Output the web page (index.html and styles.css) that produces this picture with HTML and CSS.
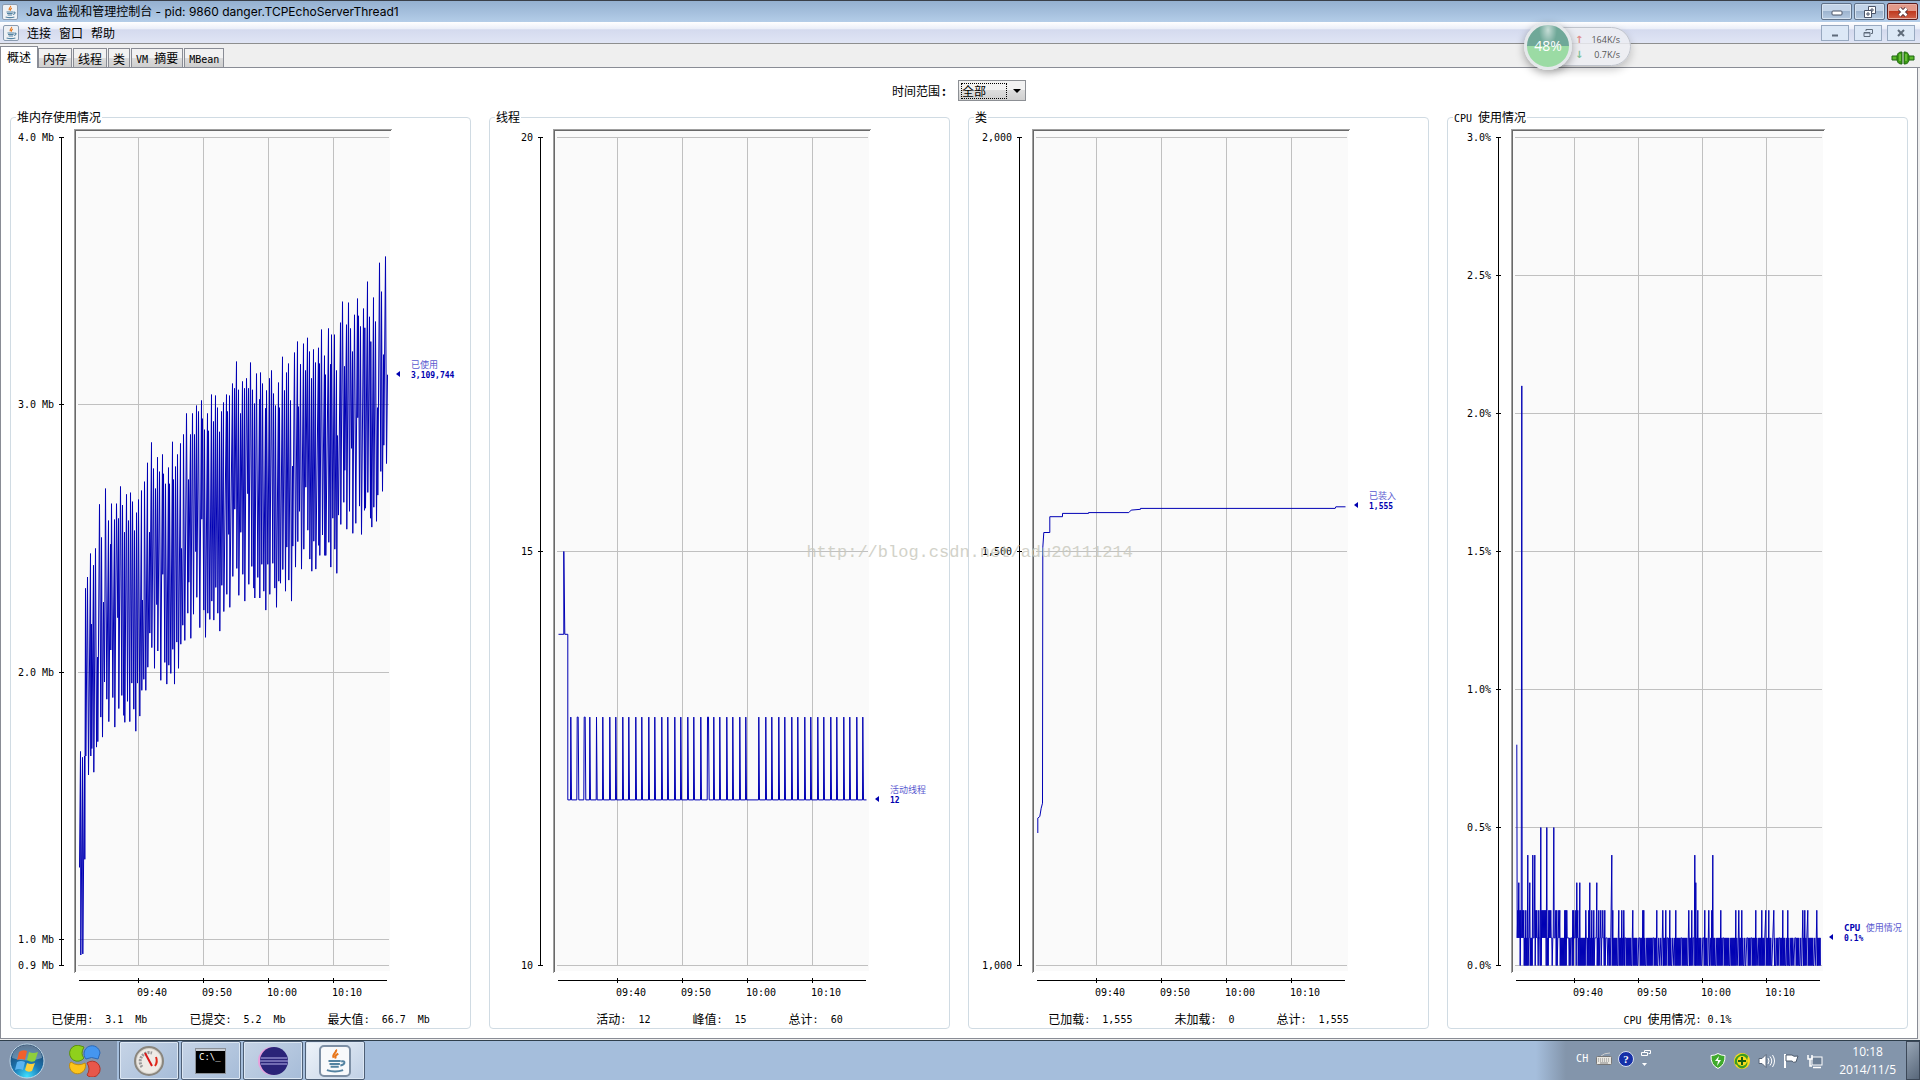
FILE: index.html
```html
<!DOCTYPE html>
<html lang="zh-CN">
<head>
    <meta charset="UTF-8">
    <title>Java 监视和管理控制台</title>
    <link rel="stylesheet" href="styles.css">
</head>
<body>
<svg class="defs" aria-hidden="true">
    <symbol id="java" viewBox="0 0 16 16">
        <path d="M8.6 1c1 1.600-2.800 2.600-1.400 5M10 3.500c-1.500 1-2.300 1.400-1.500 3" fill="none" stroke="#e8761b" stroke-width="1.300"/>
        <path d="M4 8h7.500M4.600 9.800h6.400M5.300 11.500h5M3 13.600c3 1 7 1 10 0M11.800 8.300c3-.8 2.500 2-.5 2.500" fill="none" stroke="#5382a1" stroke-width="1.200"/>
    </symbol>
</svg>
<header class="titlebar">
    <svg class="appicon"><use href="#java"/></svg>
    <h1>Java 监视和管理控制台 - pid: 9860 danger.TCPEchoServerThread1</h1>
    <div class="winbtns">
        <button aria-label="最小化"><svg width="12" height="12"><rect x="1" y="5" width="10" height="4" rx="1" fill="#fff" stroke="#4b5468"/></svg></button>
        <button aria-label="还原"><svg width="12" height="12" fill="#fff" stroke="#4b5468"><path d="M4.500 .5h7v7h-7zM7 3h2v2H7z"/><path d="M.5 4.500h7v7h-7zM3 7h2v2H3z"/></svg></button>
        <button class="close" aria-label="关闭"><svg width="12" height="12" fill="none"><path d="M2.500 2.500l7 7m0-7l-7 7" stroke="#53323a" stroke-width="4.500"/><path d="M2.500 2.500l7 7m0-7l-7 7" stroke="#fff" stroke-width="2.500"/></svg></button>
    </div>
</header>
<nav class="menubar">
    <svg class="appicon"><use href="#java"/></svg>
    <button class="menu">连接</button>
    <button class="menu">窗口</button>
    <button class="menu">帮助</button>
    <div class="winbtns inner">
        <button aria-label="最小化"><svg width="10" height="10"><path d="M2 7.500h6" stroke="#5f6b7a" stroke-width="2"/></svg></button>
        <button aria-label="还原"><svg width="10" height="10" fill="none" stroke="#5f6b7a"><path d="M3 3V1.500h6.500v4H8"/><path d="M1 4.500h6v4H1zM1 5h6"/></svg></button>
        <button aria-label="关闭"><svg width="10" height="10"><path d="M2 2l6 6m0-6l-6 6" stroke="#5f6b7a" stroke-width="2"/></svg></button>
    </div>
</nav>
<div class="tabs" role="tablist">
    <button class="tab on" role="tab">概述</button>
    <button class="tab" role="tab">内存</button>
    <button class="tab" role="tab">线程</button>
    <button class="tab" role="tab">类</button>
    <button class="tab" role="tab"><span class="mono">VM </span>摘要</button>
    <button class="tab" role="tab"><span class="mono">MBean</span></button>
    <svg class="plug" width="24" height="14">
        <path d="M1 5h6v4H1zM17 5h6v4h-6z" fill="#5cb82c" stroke="#1d6410"/>
        <path d="M11 1C7 1 6 3 6 7s1 6 5 6zM13 1c4 0 5 2 5 6s-1 6-5 6z" fill="#3c9a12" stroke="#1d6410"/>
        <path d="M9 3v7M15 3v7" stroke="#8ee05a"/>
    </svg>
</div>
<main class="pane">
    <div class="range">
        <label for="range">时间范围<b>:</b></label>
        <span class="combo"><select id="range"><option>全部</option></select></span>
    </div>
    <div class="charts">
        <fieldset class="panel">
            <legend>堆内存使用情况</legend>
            <div class="chart" id="heap"></div>
            <dl>
                <div><dt>已使用</dt><dd>:  3.1  Mb</dd></div>
                <div><dt>已提交</dt><dd>:  5.2  Mb</dd></div>
                <div><dt>最大值</dt><dd>:  66.7  Mb</dd></div>
            </dl>
        </fieldset>
        <fieldset class="panel">
            <legend>线程</legend>
            <div class="chart" id="threads"></div>
            <dl>
                <div><dt>活动</dt><dd>:  12</dd></div>
                <div><dt>峰值</dt><dd>:  15</dd></div>
                <div><dt>总计</dt><dd>:  60</dd></div>
            </dl>
        </fieldset>
        <fieldset class="panel">
            <legend>类</legend>
            <div class="chart" id="classes"></div>
            <dl>
                <div><dt>已加载</dt><dd>:  1,555</dd></div>
                <div><dt>未加载</dt><dd>:  0</dd></div>
                <div><dt>总计</dt><dd>:  1,555</dd></div>
            </dl>
        </fieldset>
        <fieldset class="panel">
            <legend><span class="mono">CPU </span>使用情况</legend>
            <div class="chart" id="cpu"></div>
            <dl>
                <div><dt><span class="mono">CPU </span>使用情况</dt><dd>: 0.1%</dd></div>
            </dl>
        </fieldset>
    </div>
</main>
<footer class="taskbar">
    <div class="launch">
        <button class="start" aria-label="开始">
            <svg width="36" height="36" viewBox="0 0 36 36">
                <defs><radialGradient id="orb" cx=".5" cy=".95" r=".9"><stop offset="0" stop-color="#3fe0ff"/><stop offset=".45" stop-color="#1b78b4"/><stop offset="1" stop-color="#1c3f66"/></radialGradient></defs>
                <circle cx="18" cy="18" r="17" fill="url(#orb)" stroke="#c0d8e8"/>
                <path d="M3 15a15 13 0 0 1 30 0q-15 5-30 0" fill="#fff" opacity=".3"/>
                <path d="M10 9q4-3 8-1l-2 9q-4-2-8 0z" fill="#f0602c"/>
                <path d="M20 9q4 2 9 0l-3 9q-4 2-8-1z" fill="#8fce3c"/>
                <path d="M8 19q4-2 8 0l-2 8q-4-2-8 0z" fill="#5cb4f0"/>
                <path d="M18 20q4 2 8 0l-3 8q-4 2-7-1z" fill="#fcd03c"/>
            </svg>
        </button>
        <button class="start" aria-label="安全桌面">
            <svg width="32" height="32" viewBox="0 0 32 32">
                <path d="M12 1A8 8 0 1 0 15 13Q11 9 15 2z" fill="#8fd01c" stroke="#5a8f10"/>
                <path d="M31 8A8 8 0 1 0 17 14Q22 11 29 14z" fill="#4596f0" stroke="#2a68b8"/>
                <path d="M19 31A8 8 0 1 0 18 18Q22 24 18 30z" fill="#e8574a" stroke="#b03428"/>
                <path d="M1 18A8 8 0 1 0 16 18Q9 22 2 17z" fill="#fcc41c" stroke="#c08c10"/>
            </svg>
        </button>
    </div>
    <button class="task" aria-label="JConsole">
        <svg width="32" height="32" viewBox="0 0 32 32">
            <circle cx="16" cy="16" r="14" fill="#d8d4cc" stroke="#8a867e" stroke-width="2"/>
            <circle cx="16" cy="16" r="12" fill="#eeebe6"/>
            <path d="M9 22a9 9 0 0 1 10-14" fill="none" stroke="#999" stroke-width="3" stroke-dasharray="2 1"/>
            <path d="M23 12q2 5-1 9" fill="none" stroke="#e02818" stroke-width="2"/>
            <path d="M12 8l7 13" stroke="#d81818" stroke-width="2"/>
        </svg>
    </button>
    <button class="task" aria-label="命令提示符">
        <svg width="32" height="26" viewBox="0 0 32 26">
            <rect x=".5" y=".5" width="30" height="25" fill="#000" stroke="#8a8f96"/>
            <path d="M1 2h29" stroke="#c8ccd2" stroke-width="2"/>
            <text x="4" y="12" class="prompt">C:\_</text>
        </svg>
    </button>
    <button class="task" aria-label="Eclipse">
        <svg width="32" height="30" viewBox="0 0 32 30">
            <circle cx="15" cy="15" r="14" fill="#e8a0dc"/>
            <circle cx="17" cy="15" r="14" fill="#2a2478"/>
            <path d="M4 12h26M3 15h28M4 18h26" stroke="#b8b4ec"/>
        </svg>
    </button>
    <button class="task hot" aria-label="Java">
        <svg width="32" height="32" viewBox="0 0 32 32">
            <rect x="1" y="1" width="30" height="30" rx="4" fill="#f8f9fb" stroke="#7d8fa5" stroke-width="2"/>
            <svg x="3" y="3" width="26" height="26"><use href="#java"/></svg>
        </svg>
    </button>
    <div class="tray">
        <div class="lang">
            <span class="ch">CH</span>
            <svg width="16" height="16"><path d="M5 5q3-3 9-3" fill="none" stroke="#ccc"/><rect x=".5" y="5.500" width="15" height="8" rx="1" fill="#e8e6e0" stroke="#777"/><path d="M2 8h12M2 10h12" stroke="#888" stroke-dasharray="1 1"/><path d="M4 12h8" stroke="#888"/></svg>
            <svg width="16" height="16"><circle cx="8" cy="8" r="7.500" fill="#1530a8" stroke="#d8e0f0"/><text x="8" y="12" class="help">?</text></svg>
            <svg width="12" height="20"><path d="M4.500 3.500v-2h6v3h-2M1.500 3.500h6v3h-6z" fill="none" stroke="#fff"/><path d="M2 14h5l-2.500 3z" fill="#fff"/></svg>
        </div>
        <div class="icons">
            <svg width="16" height="16"><path d="M8 .5Q11 2.500 15 2.500 15.500 12 8 15.500.5 12 1 2.500 5 2.500 8 .5z" fill="#3faa2c" stroke="#fff"/><path d="M9 3L5 8h3l-1 5 4-6H8z" fill="#fff"/></svg>
            <svg width="16" height="16"><circle cx="8" cy="8" r="8" fill="#f8dc1c"/><path d="M1 11A8 8 0 0 1 14 3L13 8A5 5 0 0 1 3 12z" fill="#3c9c20"/><circle cx="8" cy="8" r="5" fill="#f8dc1c"/><path d="M8 4v8M4 8h8" stroke="#186010" stroke-width="2"/></svg>
            <svg width="17" height="16"><path d="M1 5.500h3l4-4v13l-4-4H1z" fill="#fff" stroke="#59677a"/><path d="M10 5q2 3 0 6M12 3.500q3.500 4.500 0 9M14.500 2q4 6 0 12" fill="none" stroke="#fff"/></svg>
            <svg width="16" height="16"><path d="M2 1v14" stroke="#fff" stroke-width="2"/><path d="M3 2h6q1 2 6 1l-2 6q-3 1-4-1H3z" fill="#fff" stroke="#4d5a6c"/></svg>
            <svg width="16" height="16"><rect x="5" y="4" width="10" height="8" fill="#6c7f95" stroke="#fff"/><path d="M6 14.500h8M1 2v4h4V2M3 6v7h2" fill="none" stroke="#fff" stroke-width="1.500"/></svg>
        </div>
        <div class="clock">10:18<br>2014/11/5</div>
        <button class="desk" aria-label="显示桌面"></button>
    </div>
</footer>
<div class="ball">
    <div class="speed">
        <span><i class="up">↑</i>164K/s</span>
        <span><i class="down">↓</i>0.7K/s</span>
    </div>
    <div class="disc">48%</div>
</div>
<div class="mark">http://blog.csdn.net/adu20111214</div>
<script src="charts.js"></script>
</body>
</html>
```

FILE: styles.css
```css
* {
    margin: 0;
    padding: 0;
    box-sizing: border-box;
}

body {
    height: 100vh;
    display: flex;
    flex-direction: column;
    overflow: hidden;
    background: #efefef;
    color: #000;
    font: 12px/14px "Noto Sans CJK SC", sans-serif;
}

button {
    font: inherit;
    color: inherit;
    border: none;
    background: none;
}

.mono {
    font-family: "DejaVu Sans Mono", monospace;
    font-size: 10px;
    white-space: pre;
}

.defs {
    position: absolute;
    width: 0;
    height: 0;
}

.appicon {
    width: 16px;
    height: 16px;
    background: #eef1f5;
    border: 1px solid #8a9bb0;
    border-radius: 2px;
}

/* window frame */
.titlebar {
    height: 22px;
    display: flex;
    align-items: center;
    padding: 0 2px;
    border-top: 1px solid #3a3f48;
    background: linear-gradient(#94b0d0, #b4cde8);
}

.titlebar h1 {
    flex: 1;
    margin-left: 8px;
    font: 12px/20px "Inter", "Noto Sans CJK SC", sans-serif;
}

.winbtns {
    display: flex;
    gap: 2px;
    margin-left: auto;
}

.winbtns button {
    width: 31px;
    height: 17px;
    display: flex;
    align-items: center;
    justify-content: center;
    border: 1px solid #5f7188;
    border-radius: 2px;
    background: linear-gradient(#c3d4e8 50%, #9db4cf 50%, #b5cae2);
    box-shadow: inset 0 0 0 1px #d5e2f0;
}

.winbtns .close {
    border-color: #5a1c1c;
    background: linear-gradient(#e29a8a 50%, #bf3a20 50%, #d0624a);
    box-shadow: inset 0 0 0 1px #e8b0a4;
}

.menubar {
    height: 22px;
    display: flex;
    align-items: center;
    padding: 0 5px 0 3px;
    border-bottom: 1px solid #8e8f8f;
    background: linear-gradient(#fff, #e9edf8 35%, #d4daee 36%, #e0e5f5);
}

.menu {
    margin-left: 8px;
}

.inner {
    gap: 5px;
}

.winbtns.inner button {
    width: 28px;
    height: 16px;
    border-color: #98a9c0;
    border-radius: 0;
    background: #dce8f6;
    box-shadow: none;
}

/* tabs */
.tabs {
    height: 24px;
    display: flex;
    align-items: flex-end;
    padding-top: 2px;
    border-bottom: 1px solid #898c95;
}

.tab {
    height: 19px;
    padding: 2px 4px 0;
    border: 1px solid #898c95;
    border-bottom: none;
    margin-right: 1px;
    background: linear-gradient(#f2f2f2 50%, #dcdcdc 50%, #cfcfcf);
}

.tab.on {
    height: 22px;
    padding: 0 6px 2px;
    margin: 0 0 -1px;
    background: #fff;
}

.plug {
    margin: 0 5px 2px auto;
}

.pane {
    flex: 1;
    min-height: 0;
    display: flex;
    flex-direction: column;
    margin: 0 2px 1px 0;
    padding: 12px 9px 9px;
    background: #fff;
    border: 1px solid #898c95;
    border-top: none;
}

.range {
    display: flex;
    justify-content: center;
    align-items: center;
    gap: 12px;
    margin-bottom: 9px;
}

.range b {
    margin-left: 2px;
}

.combo {
    width: 68px;
    height: 21px;
    display: flex;
    align-items: center;
    padding-left: 2px;
    border: 1px solid #8c8f94;
    background: linear-gradient(#f2f2f2 50%, #dddddd 50%, #d0d0d0);
}

.combo::after {
    content: "";
    margin-left: 6px;
    border: 4px solid transparent;
    border-top-color: #000;
    border-bottom: none;
}

.combo select {
    width: 46px;
    height: 16px;
    appearance: none;
    font: 12px/14px "Noto Sans CJK SC", sans-serif;
    background: none;
    border: 1px dotted #000;
    border-radius: 0;
}

/* chart panels */
.charts {
    flex: 1;
    min-height: 0;
    display: grid;
    grid-template-columns: repeat(4, minmax(0, 1fr));
    gap: 18px;
}

.panel {
    min-width: 0;
    height: 100%;
    display: flex;
    flex-direction: column;
    border: 1px solid #d0dbe3;
    border-radius: 4px;
}

.panel legend {
    height: 14px;
    margin-left: 5px;
    padding: 0 1px;
}

.chart {
    flex: 1;
    min-height: 0;
    overflow: hidden;
}

.chart svg {
    display: block;
}

.panel dl {
    height: 25px;
    display: flex;
    justify-content: center;
    gap: 42px;
    padding-top: 9px;
}

.panel dl div {
    display: flex;
}

.panel dd {
    font-family: "DejaVu Sans Mono", monospace;
    font-size: 10px;
    line-height: 16px;
    white-space: pre;
}

.chart text {
    font: 10px "DejaVu Sans Mono", monospace;
}

.chart .name {
    font: 9px "DejaVu Sans Mono", "Noto Sans CJK SC", monospace;
    fill: #5a5ad0;
}

.chart .name tspan {
    font-weight: bold;
    fill: #0000b0;
}

.chart .now {
    font: bold 8px "DejaVu Sans Mono", monospace;
    fill: #0000b0;
}

/* taskbar */
.taskbar {
    height: 40px;
    flex: none;
    display: flex;
    gap: 2px;
    border-top: 1px solid #2f3f4c;
    background: #a5bedc;
}

.launch {
    width: 117px;
    display: flex;
    align-items: center;
    gap: 24px;
    padding-left: 9px;
    background: #8496ae;
}

.start svg {
    display: block;
}

.task {
    width: 60px;
    display: flex;
    align-items: center;
    justify-content: center;
    border: 1px solid #4e5f76;
    border-radius: 2px;
    background: linear-gradient(135deg, #c6d4e6, #a6bcd8);
    box-shadow: inset 0 0 0 1px #dce7f3;
}

.hot {
    background: linear-gradient(135deg, #eef3f9, #c0d0e5);
}

.prompt {
    font: 9px "DejaVu Sans Mono", monospace;
    fill: #fff;
}

.help {
    font: bold 11px "Liberation Serif", serif;
    fill: #fff;
    text-anchor: middle;
}

.tray {
    margin-left: auto;
    display: flex;
    align-items: center;
    padding-left: 40px;
    color: #fff;
    background: linear-gradient(90deg, #a5bedc, #8395ab 30px);
}

.lang {
    display: flex;
    align-items: center;
    gap: 6px;
    margin: 0 58px 4px 0;
}

.ch {
    font: 10px "DejaVu Sans Mono", monospace;
    margin-right: 2px;
}

.icons {
    display: flex;
    gap: 8px;
    margin-right: 16px;
}

.clock {
    text-align: center;
    font: 12px/18px "Open Sans", sans-serif;
}

.desk {
    width: 14px;
    height: 39px;
    margin-left: 10px;
    border: 1px solid #3c4858;
    background: linear-gradient(135deg, #98a6b6, #58677a);
}

/* floating widget */
.ball {
    position: absolute;
    top: 22px;
    right: 289px;
    width: 107px;
    height: 48px;
}

.speed {
    position: absolute;
    left: 20px;
    right: 0;
    top: 5px;
    height: 39px;
    display: flex;
    flex-direction: column;
    justify-content: center;
    padding: 0 10px 0 30px;
    border: 1px solid #c0c4cc;
    border-radius: 20px;
    background: rgba(236, 237, 242, .85);
    box-shadow: 0 4px 8px rgba(0, 0, 0, .2);
    color: #555;
    font: 9px/15px "Open Sans", sans-serif;
}

.speed span {
    display: flex;
    justify-content: space-between;
}

.speed i {
    font: bold 10px/15px "DejaVu Sans", sans-serif;
}

.speed .up {
    color: #e08c8c;
}

.speed .down {
    color: #7cc09a;
}

.disc {
    position: absolute;
    width: 48px;
    height: 48px;
    border: 3px solid #e4e8ea;
    border-radius: 50%;
    background: radial-gradient(ellipse at 50% 12%, rgba(255, 255, 255, .6), transparent 30%), linear-gradient(#6fa898 50%, #9bdba4 50%);
    box-shadow: 0 3px 8px rgba(0, 0, 0, .35);
    color: #fff;
    text-align: center;
    font: 14px/42px "Open Sans", sans-serif;
}

.mark {
    position: absolute;
    left: 42%;
    top: 51%;
    margin-top: -8px;
    color: #c8c8bc;
    opacity: .8;
    font: 17px/20px "Liberation Mono", monospace;
    pointer-events: none;
}
```

FILE: charts.js
```js
// heap trace: alternating x, y. 777 units per Mb, 3.0 Mb at y = 480
var heapTrace = [
    238,1824, 241,1487, 242,2078, 247,1504, 248,2075, 253,1500, 254,1800, 256,1013, 257,1500, 262,980, 265,1555,
    271,912, 272,1500, 274,1117, 275,1478, 280,946, 281,1547, 286,897, 289,1474, 292,1213, 293,1458, 298,769,
    302,1387, 304,865, 307,1445, 310,1053, 313,1285, 316,723, 320,1335, 325,816, 326,1400, 331,885, 332,1192,
    334,767, 338,1330, 343,813, 344,1416, 349,767, 353,1098, 355,810, 356,1362, 361,717, 365,1324, 367,771,
    371,1382, 373,850, 374,1402, 379,740, 382,1341, 385,816, 389,1400, 391,735, 395,1288, 397,761, 401,1364,
    403,845, 407,1428, 409,793, 412,1288, 415,755, 419,1384, 424,729, 425,1309, 427,1047, 431,1277, 433,703,
    437,1309, 442,648, 443,1242, 448,850, 449,1143, 454,589, 455,1185, 460,665, 463,1245, 466,723, 470,1060,
    472,632, 473,1195, 478,674, 482,1280, 487,624, 488,972, 490,680, 494,1228, 496,709, 500,1291, 505,662,
    506,1236, 508,709, 512,1260, 517,587, 518,1190, 520,697, 523,1291, 526,659, 530,1169, 532,624, 535,1245,
    541,592, 542,1175, 544,897, 548,1120, 550,566, 554,1164, 559,505, 563,1085, 565,697, 566,995, 571,566,
    572,1158, 577,505, 580,1088, 583,566, 587,906, 589,482, 590,1039, 595,499, 599,1127, 604,467, 605,812,
    607,520, 611,1076, 613,552, 616,1155, 622,505, 623,1085, 625,555, 629,1103, 634,450, 635,1050, 640,528,
    641,1105, 646,453, 647,1010, 652,488, 653,1085, 658,558, 659,1137, 664,499, 665,1004, 670,473, 671,1080,
    679,450, 680,1030, 682,499, 686,856, 688,453, 689,1068, 697,418, 698,978, 703,432, 704,783, 709,354,
    710,955, 715,436, 716,1033, 721,505, 722,850, 727,412, 728,972, 733,432, 734,1050, 739,403, 743,738,
    745,432, 746,1001, 751,357, 755,949, 757,436, 761,1012, 763,476, 764,1041, 769,389, 773,981, 778,464,
    779,1041, 781,386, 785,943, 787,418, 791,1021, 796,490, 797,1076, 799,438, 803,943, 808,403, 809,1030,
    814,380, 818,940, 820,447, 824,1012, 826,482, 829,1068, 835,415, 836,992, 838,488, 841,998, 847,340,
    848,958, 853,438, 856,1021, 859,386, 860,893, 865,360, 866,989, 871,467, 874,1050, 877,658, 878,890,
    883,328, 886,951, 892,296, 893,877, 895,485, 898,789, 901,362, 904,957, 910,302, 911,899, 916,380,
    917,719, 922,285, 923,844, 928,325, 929,928, 934,403, 935,963, 940,319, 941,876, 946,357, 947,957,
    955,314, 956,888, 958,360, 959,917, 964,261, 967,858, 973,337, 974,917, 976,392, 977,917, 985,258,
    986,879, 991,362, 992,951, 994,276, 998,809, 1003,276, 1004,899, 1009,380, 1010,969, 1012,569, 1015,800,
    1021,241, 1022,827, 1027,180, 1031,763, 1033,368, 1034,670, 1039,247, 1040,841, 1045,183, 1048,789,
    1051,258, 1054,606, 1057,325, 1058,853, 1063,218, 1067,824, 1072,171, 1073,517, 1075,221, 1078,774,
    1081,252, 1084,856, 1090,200, 1093,786, 1094,256, 1096,780, 1102,122, 1103,734, 1108,224, 1111,809,
    1112,296, 1115,835, 1120,168, 1121,777, 1126,238, 1129,818, 1132,488, 1133,742, 1138,67, 1142,673,
    1144,151, 1147,731, 1150,334, 1151,597, 1156,49, 1159,650, 1162,392
];

var heapData = [];
for (var i = 0; i < heapTrace.length; i += 2) {
    heapData.push([heapTrace[i] - 238, 3 - (heapTrace[i + 1] - 480) / 777]);
}

// a timer thread comes up about once a minute
var threadPeaks = [37, 56, 77, 94, 114, 133, 154, 172, 193, 211, 232, 250, 271, 289, 310, 328, 349, 367, 388,
    406, 427, 447, 466, 484, 505, 523, 544, 562, 601, 622, 640, 661, 679, 700, 718, 739, 757, 778, 796, 817,
    835, 856, 874, 895, 913];
var threadData = [[0, 14], [16, 14], [16, 15], [19, 14], [28, 14], [28, 12]];
threadPeaks.forEach(function (t) {
    var flat = t == 56 || t == 77 || t == 447 ? 3 : 0;
    threadData.push([t - 1, 12], [t, 13], [t + flat, 13], [t + flat + 2, 12]);
});
threadData.push([924, 12]);

var classData = [[1, 1160], [1, 1178], [7, 1180], [11, 1190], [15, 1196], [16, 1505], [19, 1523], [37, 1523],
    [37, 1542], [75, 1542], [75, 1546], [153, 1546], [153, 1547], [274, 1547], [281, 1550], [309, 1551],
    [309, 1552], [893, 1552], [895, 1554], [924, 1554]];

// cpu: stretches that drop to 0, and samples above 0.1%
var idle = [[9, 11], [22, 33], [40, 47], [53, 55], [62, 64], [70, 72], [88, 95], [105, 107], [117, 122],
    [129, 147], [157, 160], [166, 168], [176, 178], [182, 204], [209, 232], [240, 246], [251, 254], [260, 264],
    [275, 280], [286, 320], [325, 345], [347, 362], [367, 384], [387, 422], [440, 462], [470, 492],
    [495, 512], [518, 527], [532, 557], [562, 572], [582, 632], [634, 662], [668, 684], [692, 717],
    [722, 757], [759, 767], [773, 775], [780, 817], [822, 830], [837, 852], [860, 892], [902, 910]];
var busy = {
    2: [4, 10, 13, 16, 19, 22, 29, 34, 57, 62, 68, 75, 78, 81, 84, 87, 90, 98, 101, 103, 119, 122, 128, 131, 146,
        149, 151, 170, 173, 179, 184, 189, 208, 217, 221, 225, 232, 242, 246, 254, 260, 266, 289, 307, 316,
        322, 350, 380, 382, 421, 440, 448, 460, 478, 517, 526, 545, 565, 577, 585, 613, 658, 668, 676, 718,
        736, 748, 757, 772, 799, 814, 859, 865, 874, 901],
    3: [7, 40, 181, 190, 220, 241, 538],
    4: [34, 49, 55, 286, 535, 589],
    5: [73, 91, 112],
    8: [1],
    21: [15]
};
var high = {};
for (var level in busy) {
    busy[level].forEach(function (t) {
        high[Math.floor(t / 3)] = level / 10;
    });
}
var cpuData = [];
for (var s = 0; s < 304; s++) {
    var low = idle.some(function (r) {
        return s * 3 >= r[0] - 1 && s * 3 <= r[1];
    });
    if (s > 90 && (!low || s % 7 == 3)) {
        cpuData.push([s * 3 + 1, high[s] || (s % 2 ? 0 : 0.1)]);
        if (high[s]) cpuData.push([s * 3 + 3, 0]);
    } else {
        cpuData.push([s * 3 + 1, high[s] || 0.1], [s * 3 + 2, low ? 0 : 0.1]);
    }
}
cpuData.push([911, 0.1]);

var charts = [
    {id: "heap", min: 0.904, max: 4, ticks: [[4, "4.0 Mb"], [3, "3.0 Mb"], [2, "2.0 Mb"], [1, "1.0 Mb"], [0.904, "0.9 Mb"]],
        data: heapData, span: 924, first: 177, step: 195, right: 80, name: "已使用", now: "3,109,744", last: 3.113},
    {id: "threads", min: 10, max: 20, ticks: [[20, "20"], [15, "15"], [10, "10"]],
        data: threadData, span: 924, first: 177, step: 195, right: 80, name: "活动线程", now: "12", last: 12},
    {id: "classes", min: 1000, max: 2000, ticks: [[2000, "2,000"], [1500, "1,500"], [1000, "1,000"]],
        data: classData, span: 924, first: 177, step: 195, right: 80, name: "已装入", now: "1,555", last: 1555},
    {id: "cpu", min: 0, max: 3, ticks: [[3, "3.0%"], [2.5, "2.5%"], [2, "2.0%"], [1.5, "1.5%"], [1, "1.0%"], [0.5, "0.5%"], [0, "0.0%"]],
        data: cpuData, span: 912, first: 174, step: 192, right: 84, name: "<tspan>CPU</tspan> 使用情况", now: "0.1%", last: 0.1}
];
var times = ["09:40", "09:50", "10:00", "10:10"];

function rect(x, y, w, h, color) {
    return '<rect x="' + x + '" y="' + y + '" width="' + w + '" height="' + h + '" fill="' + color + '"/>';
}

function draw(c) {
    var box = document.getElementById(c.id);
    var w = box.clientWidth, h = box.clientHeight;
    var end = w - c.right, top = 13, bottom = h - 38;
    function px(t) {
        return 68 + t / c.span * (end - 3 - 68);
    }
    function py(v) {
        return bottom - (v - c.min) / (c.max - c.min) * (bottom - top);
    }
    var out = rect(65, 7, end - 65, bottom - 1, "#fafafa");
    out += rect(63, 5, end - 61, 1, "#a0a0a0") + rect(64, 6, end - 63, 1, "#696969");
    out += rect(63, 5, 1, bottom + 3, "#a0a0a0") + rect(64, 6, 1, bottom + 1, "#696969");
    out += rect(50, top, 1, bottom - top, "#000");
    c.ticks.forEach(function (t) {
        var y = Math.round(py(t[0]));
        out += rect(67, y, end - 68, 1, "#c0c0c0") + rect(48, y, 5, 1, "#000");
        out += '<text x="43" y="' + (y + 4) + '" text-anchor="end">' + t[1] + '</text>';
    });
    out += rect(68, bottom + 15, end - 71, 1, "#000");
    times.forEach(function (t, n) {
        var x = Math.round(px(c.first + c.step * n));
        out += rect(x, top, 1, bottom - top, "#c0c0c0") + rect(x, bottom + 13, 1, 5, "#000");
        out += '<text x="' + (x - 1) + '" y="' + (bottom + 31) + '">' + t + '</text>';
    });
    out += '<polyline fill="none" stroke="#0000b4" stroke-linejoin="bevel" points="' + c.data.map(function (p) {
        return (px(p[0]) + 0.5).toFixed(1) + "," + (py(p[1]) + 0.5).toFixed(1);
    }).join(" ") + '"/>';
    var y = Math.round(py(c.last));
    out += '<path d="M' + (end + 6) + ' ' + y + 'l4 -3v6z" fill="#0000b0"/>';
    out += '<text class="name" x="' + (end + 21) + '" y="' + (y - 6) + '">' + c.name + '</text>';
    out += '<text class="now" x="' + (end + 21) + '" y="' + (y + 4) + '">' + c.now + '</text>';
    box.innerHTML = '<svg width="' + w + '" height="' + h + '">' + out + '</svg>';
}

function drawAll() {
    charts.forEach(draw);
}

drawAll();
window.onresize = drawAll;
```
